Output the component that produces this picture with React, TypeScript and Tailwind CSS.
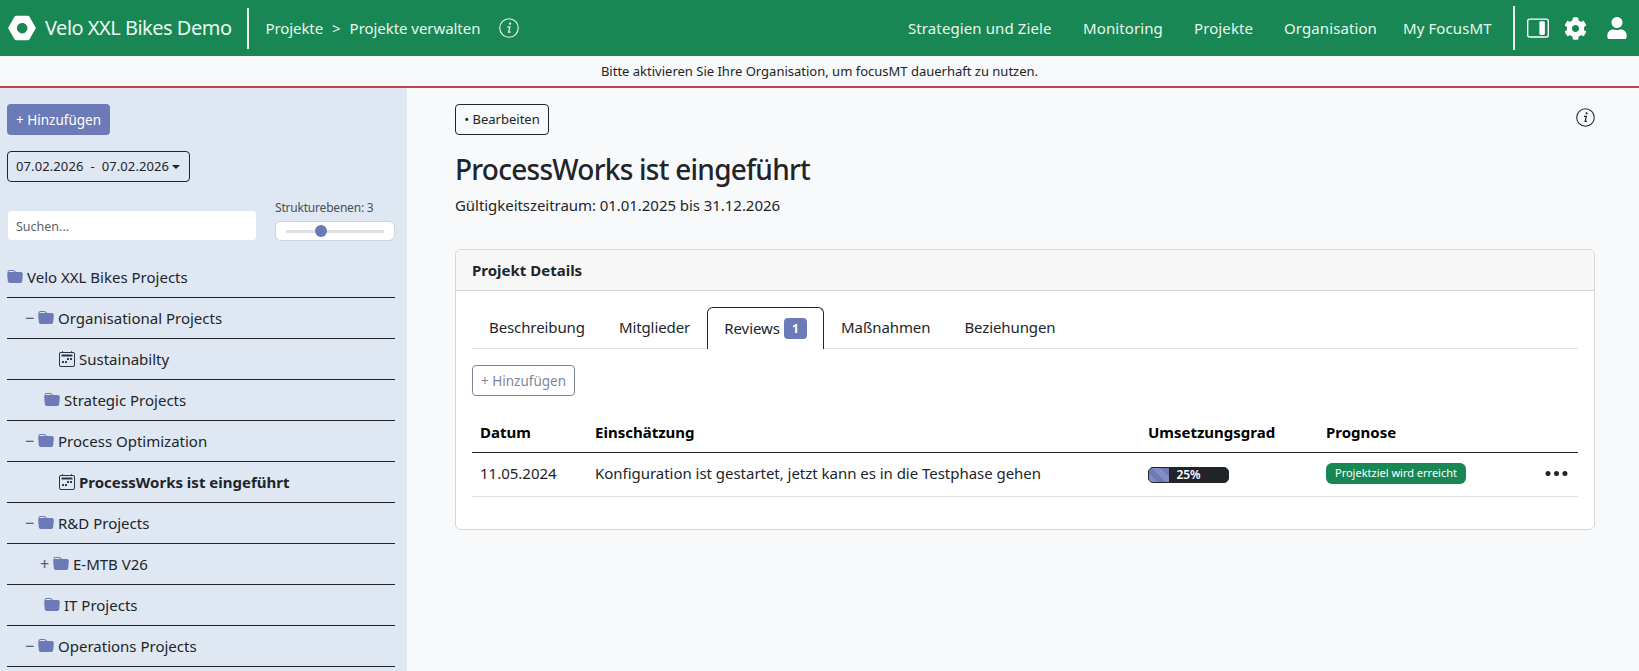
import { BsCalendar2Week, BsFolderFill, BsLayoutSidebarInsetReverse, BsNutFill, BsThreeDots } from "react-icons/bs";
import { FaCog, FaUser } from "react-icons/fa";

const NAV = [
    { label: "Strategien und Ziele", cls: "w-[175px]" },
    { label: "Monitoring", cls: "w-[111px]" },
    { label: "Projekte", cls: "w-[90px]" },
    { label: "Organisation", cls: "w-[119px]" },
    { label: "My FocusMT", cls: "w-[110px]" },
];

// pad = where the row starts, sign = tree toggle in front of the folder
const TREE = [
    { label: "Velo XXL Bikes Projects", pad: "pl-0", sign: "", icon: "folder" },
    { label: "Organisational Projects", pad: "pl-[18px]", sign: "−", icon: "folder" },
    { label: "Sustainabilty", pad: "pl-[52px]", sign: "", icon: "calendar" },
    { label: "Strategic Projects", pad: "pl-[37px]", sign: "", icon: "folder" },
    { label: "Process Optimization", pad: "pl-[18px]", sign: "−", icon: "folder" },
    { label: "ProcessWorks ist eingeführt", pad: "pl-[52px]", sign: "", icon: "calendar", active: true },
    { label: "R&D Projects", pad: "pl-[18px]", sign: "−", icon: "folder" },
    { label: "E-MTB V26", pad: "pl-[33px]", sign: "+", icon: "folder" },
    { label: "IT Projects", pad: "pl-[37px]", sign: "", icon: "folder" },
    { label: "Operations Projects", pad: "pl-[18px]", sign: "−", icon: "folder" },
];

const TABS = ["Beschreibung", "Mitglieder", "Reviews", "Maßnahmen", "Beziehungen"];

function InfoIcon({ className }: { className?: string }) {
    return (
        <svg viewBox="0 0 16 16" className={className} fill="none" stroke="currentColor" aria-hidden="true">
            <circle cx="8" cy="8" r="7.4" strokeWidth="0.9" />
            <path d="M6.7 7h2l-1 4.3h1.5" strokeWidth="1" />
            <circle cx="8.9" cy="4.5" r="0.9" fill="currentColor" stroke="none" />
        </svg>
    );
}

function TopBar() {
    return (
        <header className="h-[56px] shrink-0 bg-[#198754] text-[#e9f7f0] flex items-center">
            <BsNutFill size={28} className="ml-[8px] text-white" aria-hidden="true" />
            <span className="ml-[9px] text-[20px] tracking-[-0.5px] whitespace-nowrap">Velo XXL Bikes Demo</span>
            <div className="ml-[15px] w-[2px] h-[41px] bg-[#e9f7f0]" />
            <span className="ml-[17px] text-[15px] tracking-[-0.1px]">Projekte</span>
            <span className="ml-[9px] text-[15px]">&gt;</span>
            <span className="ml-[9px] text-[15px] tracking-[-0.05px]">Projekte verwalten</span>
            <InfoIcon className="ml-[19px] w-[20px] h-[20px]" />

            <nav className="ml-auto flex items-center">
                {NAV.map((item) => (
                    <span key={item.label} className={`${item.cls} text-[15px] tracking-[0.1px] whitespace-nowrap`}>
                        {item.label}
                    </span>
                ))}
            </nav>
            <div className="w-[2px] h-[44px] bg-[#e9f7f0]" />
            <BsLayoutSidebarInsetReverse size={22} className="ml-[12px] text-white" aria-hidden="true" />
            <FaCog size={23} className="ml-[15px] text-white" aria-hidden="true" />
            <FaUser size={22} className="ml-[19px] mr-[11px] text-white" aria-hidden="true" />
        </header>
    );
}

function Sidebar() {
    return (
        <aside className="w-[407px] shrink-0 bg-[#dfe7f2] pl-[7px] pr-[12px] pt-[16px] text-[#212529]">
            <button className="block h-[31px] w-[103px] pt-px rounded bg-[#6c7ab8] text-white text-[13.5px]">
                + Hinzufügen
            </button>
            <button className="mt-[16px] flex items-center h-[31px] w-[183px] pl-[8px] rounded border border-[#212529] text-[13px] tracking-[0.1px] whitespace-pre">
                07.02.2026  -  07.02.2026
                <span className="ml-[3px] border-x-[4px] border-t-[4px] border-x-transparent border-t-[#212529]" />
            </button>

            <div className="mt-[18px] flex items-end">
                <input
                    placeholder="Suchen..."
                    className="ml-px mb-px w-[248px] h-[29px] rounded bg-white px-[8px] pt-px text-[12.5px] placeholder:text-[#5c636a] outline-none"
                />
                <div className="ml-[19px] w-[120px]">
                    <div className="text-[12px] leading-[16px] mb-[5px] tracking-[-0.2px] text-[#495057] whitespace-nowrap">Strukturebenen: 3</div>
                    <div className="h-[20px] rounded-md bg-white border border-[#ced4da] flex items-center pl-[10px]">
                        <div className="w-[29px] h-[3px] bg-[#dee2e6]" />
                        <div className="w-[12px] h-[12px] rounded-full bg-[#6c7ab8]" />
                        <div className="w-[57px] h-[3px] bg-[#dee2e6]" />
                    </div>
                </div>
            </div>

            <ul className="mt-[16px]">
                {TREE.map((row) => (
                    <li key={row.label} className={`h-[41px] border-b border-[#212529] flex items-center ${row.pad} text-[15px] whitespace-nowrap`}>
                        {row.sign && <span className="w-[13px] text-[16px] font-medium text-[#5c636a] leading-none">{row.sign}</span>}
                        {row.icon === "folder" ? (
                            <BsFolderFill size={16} className="text-[#6c7ab8] mr-[4px]" aria-hidden="true" />
                        ) : (
                            <BsCalendar2Week size={16} className="text-[#2a3446] mr-[4px]" aria-hidden="true" />
                        )}
                        <span className={row.active ? "font-bold" : ""}>{row.label}</span>
                    </li>
                ))}
            </ul>
        </aside>
    );
}

function ReviewsCard() {
    return (
        <section className="mt-[32px] h-[281px] rounded-md border border-[#d5d7da] bg-white">
            <div className="h-[41px] bg-[#f7f7f7] border-b border-[#d5d7da] rounded-t-md flex items-center pl-[16px] text-[15px] font-bold">
                Projekt Details
            </div>
            <div className="px-[16px] pt-[16px]">
                <div className="h-[42px] border-b border-[#dee2e6] flex">
                    {TABS.map((tab) =>
                        tab === "Reviews" ? (
                            <div key={tab} className="h-[42px] w-[117px] rounded-t-md border border-b-0 border-[#212529] bg-white flex items-center justify-center text-[15px] tracking-[-0.05px]">
                                {tab}
                                <span className="ml-[4px] w-[23px] h-[21px] rounded bg-[#6c7ab8] text-white text-[12px] font-bold flex items-center justify-center">1</span>
                            </div>
                        ) : (
                            <div key={tab} className="px-[17px] flex items-center text-[15px] tracking-[-0.1px]">
                                {tab}
                            </div>
                        )
                    )}
                </div>

                <button className="mt-[16px] block h-[31px] w-[103px] pt-px rounded border border-[#7d8699] text-[#7d8699] text-[13.5px]">
                    + Hinzufügen
                </button>

                <div className="mt-[17px] h-[40px] border-b border-[#212529] grid grid-cols-[123px_553px_178px_1fr] items-center text-[15px] font-bold text-black">
                    <span className="pl-[8px]">Datum</span>
                    <span>Einschätzung</span>
                    <span>Umsetzungsgrad</span>
                    <span>Prognose</span>
                </div>
                <div className="h-[44px] pb-[2px] border-b border-[#dee2e6] grid grid-cols-[123px_553px_178px_1fr] items-center text-[15px]">
                    <span className="pl-[8px]">11.05.2024</span>
                    <span className="whitespace-nowrap tracking-[-0.03px]">Konfiguration ist gestartet, jetzt kann es in die Testphase gehen</span>
                    <div className="relative mt-[2px] h-[16px] w-[81px] rounded-[5px] border border-[#212529] bg-[#212529] overflow-hidden">
                        <div className="h-full w-[20px] bg-[#6c7ab8] bg-[repeating-linear-gradient(45deg,rgba(255,255,255,0.15)_0,rgba(255,255,255,0.15)_6px,transparent_6px,transparent_12px)]" />
                        <span className="absolute inset-0 flex items-center justify-center text-[12px] font-semibold text-white">25%</span>
                    </div>
                    <div className="flex items-center justify-between pr-[8px]">
                        <span className="h-[21px] w-[140px] rounded-md bg-[#198754] text-white text-[11px] flex items-center justify-center whitespace-nowrap">
                            Projektziel wird erreicht
                        </span>
                        <BsThreeDots size={27} aria-hidden="true" />
                    </div>
                </div>
            </div>
        </section>
    );
}

export default function App() {
    return (
        <div className="h-screen overflow-hidden flex flex-col bg-[#f8f9fb] text-[#212529] font-['Noto_Sans',sans-serif]">
            <TopBar />
            <div className="h-[32px] pt-px shrink-0 bg-[#f8f9fb] border-b-2 border-[#c5444f] flex items-center justify-center text-[13px]">
                Bitte aktivieren Sie Ihre Organisation, um focusMT dauerhaft zu nutzen.
            </div>
            <div className="flex-1 min-h-0 flex overflow-hidden">
                <Sidebar />
                <main className="flex-1 pl-[48px] pr-[44px] pt-[16px]">
                    <div className="flex items-start justify-between">
                        <button className="h-[31px] w-[94px] pt-px rounded border border-[#212529] text-[13px]">
                            • Bearbeiten
                        </button>
                        <InfoIcon className="mt-[4px] w-[19px] h-[19px]" />
                    </div>
                    <h1 className="mt-[17px] text-[28px] leading-[34px] font-medium tracking-[-0.75px]">ProcessWorks ist eingeführt</h1>
                    <p className="mt-[7px] text-[15px] leading-[24px] tracking-[-0.05px]">Gültigkeitszeitraum: 01.01.2025 bis 31.12.2026</p>
                    <ReviewsCard />
                </main>
            </div>
        </div>
    );
}
